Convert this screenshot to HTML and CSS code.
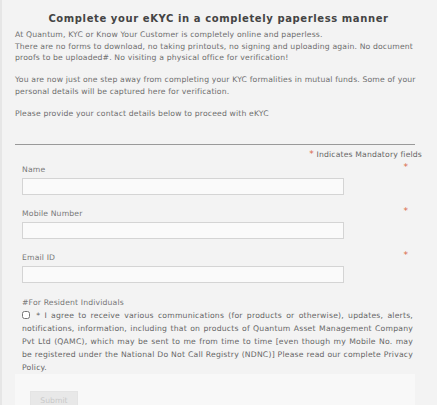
FILE: index.html
```html
<!DOCTYPE html>
<html lang="en">
<head>
    <meta charset="UTF-8">
    <meta name="viewport" content="width=device-width, initial-scale=1.0">
    <title>eKYC</title>
    <link rel="stylesheet" href="styles.css">
</head>
<body>
    <div class="page">
        <h1 class="title">Complete your eKYC in a completely paperless manner</h1>
        <div class="intro">
            <p>At Quantum, KYC or Know Your Customer is completely online and paperless.<br>
            There are no forms to download, no taking printouts, no signing and uploading again. No document proofs to be uploaded#. No visiting a physical office for verification!</p>
            <p>You are now just one step away from completing your KYC formalities in mutual funds. Some of your personal details will be captured here for verification.</p>
            <p>Please provide your contact details below to proceed with eKYC</p>
        </div>
        <hr class="rule">
        <div class="mandatory"><span class="star">*</span> Indicates Mandatory fields</div>
        <form class="form">
            <div class="field">
                <label for="name">Name</label>
                <span class="star">*</span>
                <input type="text" id="name">
            </div>
            <div class="field">
                <label for="mobile">Mobile Number</label>
                <span class="star">*</span>
                <input type="text" id="mobile">
            </div>
            <div class="field">
                <label for="email">Email ID</label>
                <span class="star">*</span>
                <input type="text" id="email">
            </div>
            <div class="resident">#For Resident Individuals</div>
            <div class="consent">
                <input type="checkbox" id="agree"> * I agree to receive various communications (for products or otherwise), updates, alerts, notifications, information, including that on products of Quantum Asset Management Company Pvt Ltd (QAMC), which may be sent to me from time to time [even though my Mobile No. may be registered under the National Do Not Call Registry (NDNC)] Please read our complete Privacy Policy.
            </div>
            <div class="actions">
                <button type="button" class="submit" disabled>Submit</button>
            </div>
        </form>
    </div>
</body>
</html>
```

FILE: styles.css
```css
body {
    margin: 0;
    background: #f3f3f3;
    font-family: "DejaVu Sans", Verdana, sans-serif;
    color: #666;
}
.page {
    height: 405px;
    overflow: hidden;
    border-left: 2px solid #e6e6e6;
    padding: 0 15px 0 13px;
}
.title {
    margin: 0;
    padding-top: 12px;
    font-size: 10px;
    letter-spacing: 0.6px;
    color: #444;
    text-align: center;
    line-height: 14px;
}
.intro {
    font-size: 7.7px;
    letter-spacing: 0.15px;
    line-height: 11.5px;
    color: #6e6e6e;
}
.intro p {
    margin: 3px 0 10.5px 0;
}
.rule {
    border: none;
    border-top: 1px solid #999;
    margin: 25px 0 0 0;
    width: 400px;
}
.mandatory {
    text-align: right;
    font-size: 7.7px;
    letter-spacing: 0.15px;
    margin-top: 4px;
    color: #666;
}
.star {
    color: #d9694a;
    font-size: 9px;
}
.form {
    padding: 0 0 0 7px;
}
.field {
    position: relative;
    margin-top: 6px;
}
.field + .field {
    margin-top: 14px;
}
.field:last-of-type {
    margin-top: 13px;
}
.field label {
    display: block;
    font-size: 7.7px;
    letter-spacing: 0.15px;
    line-height: 10px;
    color: #777;
}
.field .star {
    position: absolute;
    right: 14px;
    top: -3px;
}
.field input {
    display: block;
    width: 322px;
    height: 17px;
    margin-top: 3px;
    box-sizing: border-box;
    border: 1px solid #d4d4d4;
    background: #fafafa;
}
.field:last-of-type input {
    height: 18px;
}
.resident {
    margin-top: 15px;
    font-size: 7.7px;
    letter-spacing: 0.15px;
    color: #777;
}
.consent {
    font-size: 7.7px;
    letter-spacing: 0.2px;
    line-height: 13px;
    color: #666;
    margin: 2px 9px 0 0;
    text-align: justify;
}
.consent input {
    width: 8px;
    height: 8px;
    margin: 0 2px 0 0;
    vertical-align: -1px;
}
.actions {
    margin: 0 0 0 -7px;
    background: #f8f8f8;
    width: 400px;
    height: 40px;
    padding-top: 14px;
}
.submit {
    margin-left: 15px;
    width: 48px;
    height: 20px;
    border: 1px solid #e4e4e4;
    background: #e8e8e8;
    color: #c8c8c8;
    font-family: "DejaVu Sans", Verdana, sans-serif;
    font-size: 7.7px;
    line-height: 10px;
    padding: 0;
}
```
